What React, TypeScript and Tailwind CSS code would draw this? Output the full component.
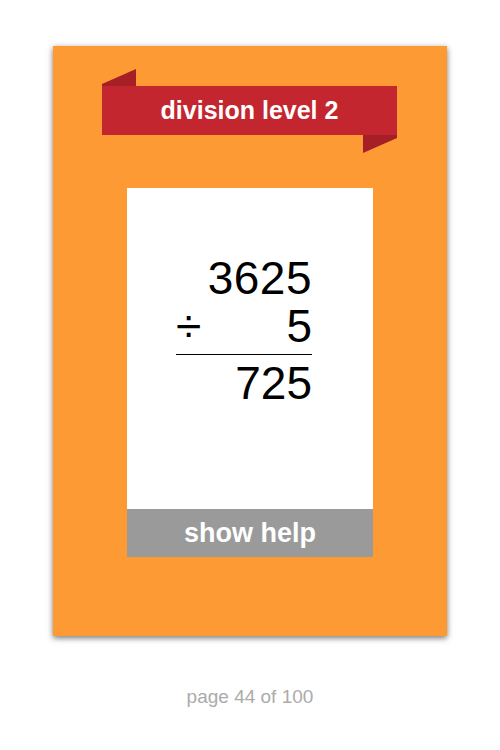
import React from 'react';

const Banner = ({ title }: { title: string }) => (
  <div className="relative ml-[49px] mt-[40px] h-[49px] w-[295px]">
    <svg className="absolute left-0 top-[-17px]" width="34" height="17" viewBox="0 0 34 17">
      <polygon points="0,15 34,0 34,17 0,17" fill="#a61e26" />
    </svg>
    <svg className="absolute right-0 bottom-[-18px]" width="34" height="18" viewBox="0 0 34 18">
      <polygon points="0,0 34,0 34,3 0,18" fill="#a61e26" />
    </svg>
    <div className="relative flex h-full w-full items-center justify-center bg-[#c4262f] text-[25px] font-bold text-white">
      {title}
    </div>
  </div>
);

const Problem = () => (
  <div className="ml-[49px] mt-[66px] w-[136px] text-[46px] leading-[48px] text-black">
    <div className="text-right tracking-[0.5px]">3625</div>
    <div className="flex justify-between">
      <span>÷</span>
      <span>5</span>
    </div>
    <div className="mt-[4px] h-px bg-black" />
    <div className="mt-[4px] text-right">725</div>
  </div>
);

export default function App() {
  return (
    <div className="h-[750px] w-[500px] bg-white" style={{ fontFamily: '"Liberation Sans", Arial, sans-serif' }}>
      <div className="h-[46px]" />
      <div className="ml-[53px] flex h-[590px] w-[394px] flex-col bg-[#fe9a34] shadow-[0_2px_6px_rgba(0,0,0,0.55)]">
        <Banner title="division level 2" />
        <div className="ml-[74px] mt-[53px] flex h-[369px] w-[246px] flex-col bg-white">
          <div className="flex-1">
            <Problem />
          </div>
          <div className="flex h-[48px] items-center justify-center bg-[#9a9a9a] text-[27px] font-bold text-white">
            show help
          </div>
        </div>
      </div>
      <div className="mt-[47px] text-center text-[19px] text-[#ababab]">page 44 of 100</div>
    </div>
  );
}
